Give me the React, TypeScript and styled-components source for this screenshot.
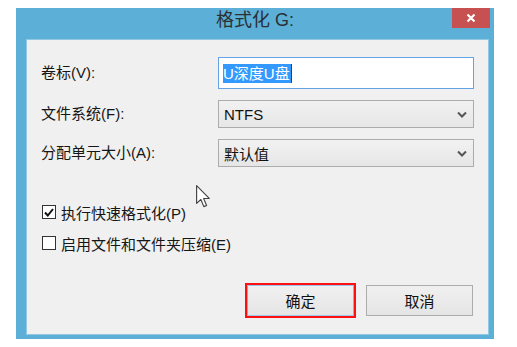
import styled, { createGlobalStyle } from "styled-components";

const GlobalStyle = createGlobalStyle`
  html, body {
    margin: 0;
    padding: 0;
    background: #ffffff;
  }

  body {
    width: 517px;
    height: 347px;
    overflow: hidden;
    font-family: "Liberation Sans", "Noto Sans CJK SC", sans-serif;
  }
`;

const Page = styled.div`
  padding: 8px 0 0 16px;
`;

const Frame = styled.div`
  width: 478px;
  height: 331px;
  box-sizing: border-box;
  background-color: #5cafd6;
  padding: 0 5px 4px 10px;

  display: flex;
  flex-direction: column;
`;

const TitleBar = styled.div`
  height: 31px;
  margin: 0 -5px 0 -10px;

  display: grid;
  grid-template-columns: 1fr auto 1fr;
  align-items: start;
`;

const Title = styled.div`
  grid-column: 2;
  line-height: 24px;
  font-size: 18px;
  color: #2a3034;
`;

const CloseButton = styled.div`
  grid-column: 3;
  justify-self: end;
  margin-right: 4px;

  width: 38px;
  height: 20px;
  background-color: #c75050;

  display: flex;
  justify-content: center;
  align-items: center;
`;

const Client = styled.div`
  position: relative;
  flex: 1;
  box-sizing: border-box;
  border: 1px solid #93c8e2;
  background-color: #f0f0f0;

  display: flex;
  flex-direction: column;
  padding: 17px 14px 18px 14px;
`;

const Form = styled.div`
  display: grid;
  grid-template-columns: 177px 1fr;
  grid-template-rows: 32px 28px 28px;
  row-gap: 11px;
  align-items: center;
`;

const Label = styled.div`
  font-size: 15px;
  line-height: 20px;
  color: #161616;
`;

const TextBox = styled.div`
  height: 32px;
  box-sizing: border-box;
  border: 1px solid #64a3e6;
  background-color: #ffffff;
  padding-left: 4px;

  display: flex;
  align-items: center;
`;

const Selected = styled.span`
  background-color: #3399ff;
  color: #ffffff;
  font-size: 15px;
  line-height: 19px;
  padding-right: 1px;
`;

const Caret = styled.span`
  width: 1px;
  height: 19px;
  background-color: #5a3a10;
`;

const Select = styled.div`
  height: 28px;
  box-sizing: border-box;
  border: 1px solid #acacac;
  background: linear-gradient(#f2f2f2, #e6e6e6);
  padding: 0 6px 0 5px;

  display: flex;
  justify-content: space-between;
  align-items: center;

  font-size: 15px;
  color: #111111;
`;

const Checks = styled.div`
  margin-top: 37px;
  display: flex;
  flex-direction: column;
  gap: 15px;
`;

const CheckRow = styled.div`
  display: flex;
  align-items: center;
  gap: 5px;
  height: 16px;
  padding-left: 1px;

  font-size: 15px;
  color: #161616;
`;

const Box = styled.div`
  width: 14px;
  height: 14px;
  box-sizing: border-box;
  border: 1px solid #333333;
  background-color: #ffffff;

  display: flex;
  justify-content: center;
  align-items: center;
`;

const Buttons = styled.div`
  margin-top: auto;
  display: flex;
  justify-content: flex-end;
  gap: 12px;
  padding-right: 1px;
`;

const Button = styled.div<{ $default?: boolean }>`
  width: 107px;
  height: 31px;
  box-sizing: border-box;
  border: 1px solid ${props => (props.$default ? "#9bc7ee" : "#acacac")};
  border-left-color: #acacac;
  border-right-color: #acacac;
  background: linear-gradient(#f0f0f0, #e5e5e5);
  outline: ${props => (props.$default ? "2px solid #ff1010" : "none")};

  display: flex;
  justify-content: center;
  align-items: center;

  font-size: 15px;
  color: #111111;
`;

const Cursor = styled.svg`
  position: absolute;
  left: 169px;
  top: 145px;
`;

const Chevron = () => (
  <svg width="10" height="7" viewBox="0 0 10 7">
    <path d="M1 1.5 L5 5.5 L9 1.5" fill="none" stroke="#555" strokeWidth="2" />
  </svg>
);

const App = () => {
  return (
    <Page>
      <GlobalStyle />
      <Frame>
        <TitleBar>
          <Title>格式化 G:</Title>
          <CloseButton>
            <svg width="10" height="10" viewBox="0 0 10 10">
              <path d="M1.5 1.5 L8.5 8.5 M8.5 1.5 L1.5 8.5" stroke="#fff" strokeWidth="2.2" />
            </svg>
          </CloseButton>
        </TitleBar>
        <Client>
          <Form>
            <Label>卷标(V):</Label>
            <TextBox>
              <Selected>U深度U盘</Selected>
              <Caret />
            </TextBox>
            <Label>文件系统(F):</Label>
            <Select>
              NTFS
              <Chevron />
            </Select>
            <Label>分配单元大小(A):</Label>
            <Select>
              默认值
              <Chevron />
            </Select>
          </Form>
          <Checks>
            <CheckRow>
              <Box>
                <svg width="10" height="9" viewBox="0 0 10 9">
                  <path d="M1 4.5 L3.8 7.5 L9 1" fill="none" stroke="#111" strokeWidth="2" />
                </svg>
              </Box>
              执行快速格式化(P)
            </CheckRow>
            <CheckRow>
              <Box />
              启用文件和文件夹压缩(E)
            </CheckRow>
          </Checks>
          <Buttons>
            <Button $default>确定</Button>
            <Button>取消</Button>
          </Buttons>
          <Cursor width="15" height="23" viewBox="0 0 13 20">
            <path
              d="M0.5 0.5 L0.5 16 L4.2 12.6 L6.8 18.8 L9.2 17.8 L6.6 11.7 L11.5 11.7 Z"
              fill="#fff"
              stroke="#444"
              strokeWidth="1"
              strokeLinejoin="round"
            />
          </Cursor>
        </Client>
      </Frame>
    </Page>
  );
};

export default App;
